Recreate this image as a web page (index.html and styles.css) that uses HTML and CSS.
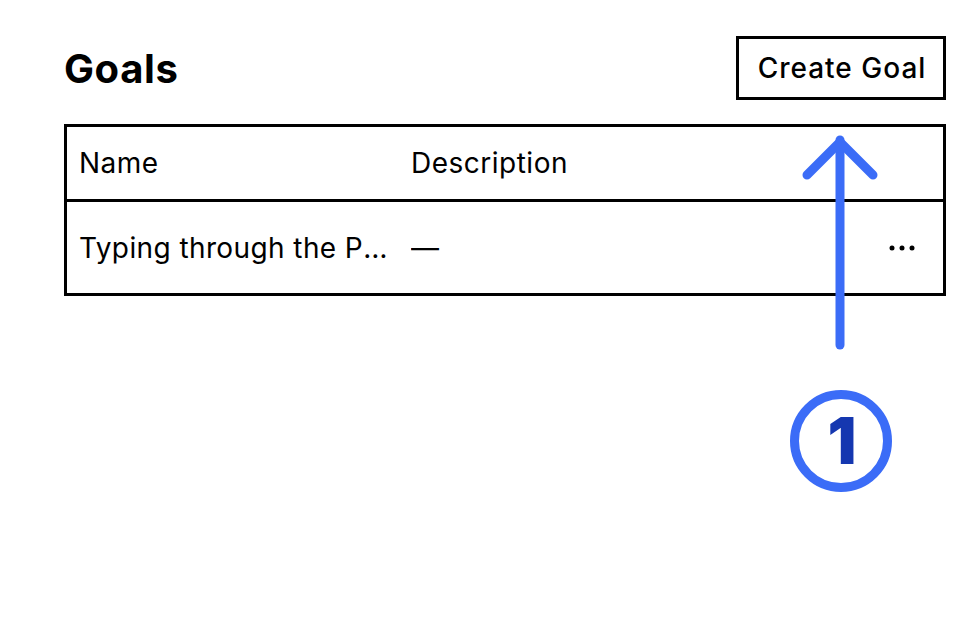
FILE: index.html
```html
<!DOCTYPE html>
<html lang="en">

<head>
  <meta charset="UTF-8">
  <meta name="viewport" content="width=device-width, initial-scale=1.0">
  <title>Goals</title>
  <link rel="stylesheet" href="styles.css">
</head>

<body>
  <div class="page">
    <div class="top-bar">
      <h1 class="title">Goals</h1>
      <button class="create-btn">Create Goal</button>
    </div>

    <div class="goals-table">
      <div class="row head">
        <div class="cell name">Name</div>
        <div class="cell desc">Description</div>
        <div class="cell actions"></div>
      </div>
      <div class="row body">
        <div class="cell name">Typing through the Pacific Ocean</div>
        <div class="cell desc">—</div>
        <div class="cell actions">
          <svg width="26" height="6" viewBox="0 0 26 6">
            <circle cx="3" cy="3" r="2.5" fill="#000" />
            <circle cx="13" cy="3" r="2.5" fill="#000" />
            <circle cx="23" cy="3" r="2.5" fill="#000" />
          </svg>
        </div>
      </div>
    </div>
  </div>

  <!-- annotation overlay -->
  <svg class="hint" width="120" height="380" viewBox="0 0 120 380">
    <g fill="none" stroke="#3b6cf7" stroke-width="9" stroke-linecap="round" stroke-linejoin="round">
      <path d="M60 10 V 215" />
      <path d="M27 45 L60 12 L93 45" />
      <circle cx="61" cy="311" r="46.5" />
    </g>
  </svg>
  <div class="hint-num">1</div>
</body>

</html>
```

FILE: styles.css
```css
* {
  box-sizing: border-box;
}

body {
  margin: 0;
  font-family: Inter, "Noto Sans", sans-serif;
  color: #000;
  background: #fff;
}

.page {
  padding: 36px 30px 0 64px;
}

.top-bar {
  display: flex;
  justify-content: space-between;
  align-items: center;
  height: 64px;
}

.title {
  margin: 0;
  font-size: 40px;
  font-weight: 700;
  letter-spacing: 0.6px;
}

.create-btn {
  width: 210px;
  height: 64px;
  border: 3px solid #000;
  background: #fff;
  font-family: inherit;
  font-size: 28px;
  font-weight: 500;
  letter-spacing: 1px;
  color: #000;
  padding: 0 0 0 2px;
}

.goals-table {
  margin-top: 24px;
  border: 3px solid #000;
}

.row {
  display: flex;
  align-items: center;
}

.row.head {
  height: 75px;
  border-bottom: 3px solid #000;
}

.row.body {
  height: 91px;
}

.cell {
  padding: 0 12px;
  font-size: 28px;
  letter-spacing: 0.5px;
  white-space: nowrap;
  overflow: hidden;
  text-overflow: ellipsis;
}

.cell.name {
  width: 344px;
  flex-shrink: 0;
  padding-right: 16px;
}

.row.body .cell.name {
  letter-spacing: 0.4px;
}

.cell.desc {
  flex-grow: 1;
  padding-left: 0;
}

.cell.actions {
  width: 80px;
  padding: 0 28px 0 0;
  display: flex;
  justify-content: flex-end;
}

.hint {
  position: absolute;
  left: 780px;
  top: 130px;
}

.hint-num {
  position: absolute;
  left: 791px;
  top: 389px;
  width: 102px;
  height: 102px;
  display: flex;
  align-items: center;
  justify-content: center;
  font-family: Inter, sans-serif;
  font-weight: 900;
  font-size: 64px;
  color: #1537b0;
}
```
